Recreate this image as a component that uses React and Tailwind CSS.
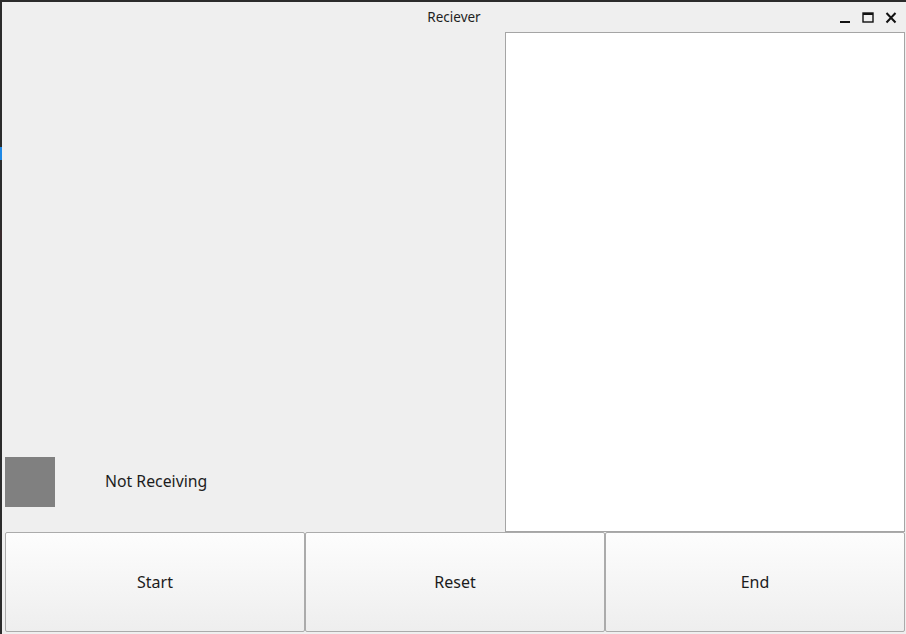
import React from "react";

function Btn({ label }) {
  return (
    <button className="w-[300px] h-[100px] border border-[#ababab] rounded-[2px] bg-gradient-to-b from-[#fdfdfd] to-[#eeeeee] text-[16px] text-[#1c1c1c] flex items-center justify-center">
      {label}
    </button>
  );
}

export default function App() {
  return (
    <div
      className="w-[906px] h-[634px] bg-[#2b2b2b] flex flex-row overflow-hidden"
      style={{ fontFamily: '"Noto Sans", "DejaVu Sans", sans-serif' }}
    >
      <div className="w-[2px] flex flex-col shrink-0">
        <div className="h-[147px]" />
        <div className="h-[13px] bg-[#1e88e5]" />
        <div className="h-[70px]" />
        <div className="h-[10px] bg-[#3a2a2c]" />
      </div>
      <div className="flex flex-col w-[904px]">
        <div className="h-[2px] shrink-0" />
        <div className="flex flex-col bg-[#efefef] h-[632px]">
          <div className="h-[30px] flex items-center relative shrink-0">
            <div className="flex-1 text-center text-[13.5px] text-[#1e1e1e]">Reciever</div>
            <div className="absolute right-[8px] top-[9px] flex items-center gap-[9px]">
              <svg width="14" height="14" viewBox="0 0 14 14">
                <rect x="2" y="10" width="10" height="2" fill="#111" />
              </svg>
              <svg width="14" height="14" viewBox="0 0 14 14">
                <rect x="2" y="2" width="10" height="9" fill="none" stroke="#111" strokeWidth="1.4" />
                <rect x="2" y="2" width="10" height="2" fill="#111" />
              </svg>
              <svg width="14" height="14" viewBox="0 0 14 14">
                <path d="M2.5 2 L11.5 11.5 M11.5 2 L2.5 11.5" stroke="#111" strokeWidth="2" />
              </svg>
            </div>
          </div>
          <div className="flex flex-row h-[500px]">
            <div className="w-[503px] flex flex-col justify-end pl-[3px] pb-[25px]">
              <div className="flex items-center">
                <div className="w-[50px] h-[50px] bg-[#808080]" />
                <span className="ml-[50px] text-[15.8px] text-[#1c1c1c]">Not Receiving</span>
              </div>
            </div>
            <div className="w-[400px] h-[500px] bg-white border border-[#a5a5a5]" />
          </div>
          <div className="flex flex-row pl-[3px]">
            <Btn label="Start" />
            <Btn label="Reset" />
            <Btn label="End" />
          </div>
        </div>
      </div>
    </div>
  );
}
